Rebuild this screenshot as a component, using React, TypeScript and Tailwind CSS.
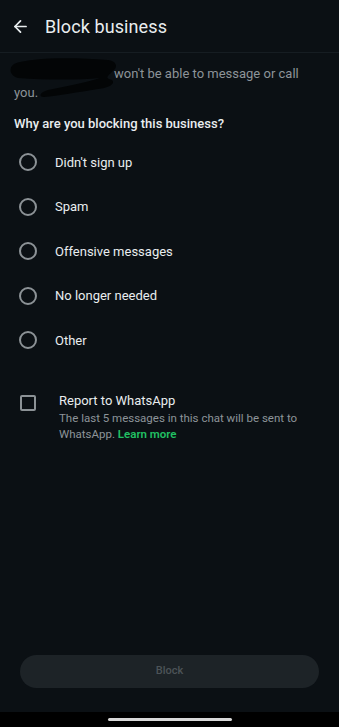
import { ArrowLeft } from 'lucide-react';

export default function App() {
  const reasons = ["Didn't sign up", "Spam", "Offensive messages", "No longer needed", "Other"];

  return (
    <div className="w-[339px] h-[727px] bg-[#0b1014] flex flex-col overflow-hidden" style={{ fontFamily: 'Roboto, "Liberation Sans", sans-serif' }}>
      {/* Header */}
      <div className="h-[53px] flex items-center border-b border-[#161d22] shrink-0">
        <ArrowLeft className="w-[19px] h-[19px] text-[#e9edef] ml-[11px]" strokeWidth={2.2} />
        <h1 className="ml-[15px] text-[18px] text-[#e9edef] tracking-[0.1px]">Block business</h1>
      </div>

      {/* Notice */}
      <div className="relative px-[14px] pt-[11px]">
        <p className="text-[13px] leading-[19px] text-[#8d9499]">
          <span className="inline-block w-[100px]" />
          won't be able to message or call you.
        </p>
        <svg className="absolute left-[8px] top-[3px]" width="112" height="44" viewBox="0 0 112 44">
          <path d="M6 8 C20 2 60 1 100 4 C108 5 110 10 106 14 C100 20 96 22 104 24 C108 28 100 32 90 33 C70 36 50 40 36 41 C30 41 32 36 40 34 C60 30 80 26 92 22 C70 24 40 24 10 22 C2 20 0 12 6 8 Z" fill="#030506" />
        </svg>
      </div>

      {/* Question */}
      <h2 className="mt-[13px] px-[14px] text-[13px] leading-[18px] font-medium text-[#e9edef]">
        Why are you blocking this business?
      </h2>

      <div className="mt-[7px] flex flex-col">
        {reasons.map((r) => (
          <div key={r} className="h-[44.5px] flex items-center">
            <span className="ml-[19px] w-[18px] h-[18px] rounded-full border-2 border-[#8c9296]" />
            <span className="ml-[18px] text-[13px] text-[#e9edef]">{r}</span>
          </div>
        ))}
      </div>

      {/* Report */}
      <div className="mt-[29px] flex items-start">
        <span className="ml-[20px] mt-[3px] w-[16px] h-[16px] rounded-[2px] border-2 border-[#8c9296] shrink-0" />
        <div className="ml-[23px] pr-[20px]">
          <div className="text-[13px] leading-[17px] text-[#e9edef]">Report to WhatsApp</div>
          <p className="text-[11.5px] leading-[16px] text-[#8d9499] mt-[1px]">
            The last 5 messages in this chat will be sent to WhatsApp. <b className="font-semibold text-[#21c063]">Learn more</b>
          </p>
        </div>
      </div>

      <div className="flex-1" />

      {/* Button */}
      <div className="px-[20px] pb-[24px]">
        <div className="h-[33px] rounded-full bg-[#1d2327] flex items-center justify-center">
          <span className="text-[11px] font-medium text-[#4c5357]">Block</span>
        </div>
      </div>

      {/* Nav bar */}
      <div className="h-[15px] bg-black flex justify-center items-start shrink-0">
        <div className="mt-[6px] w-[124px] h-[3px] rounded-full bg-[#d8d8d8]" />
      </div>
    </div>
  );
}
